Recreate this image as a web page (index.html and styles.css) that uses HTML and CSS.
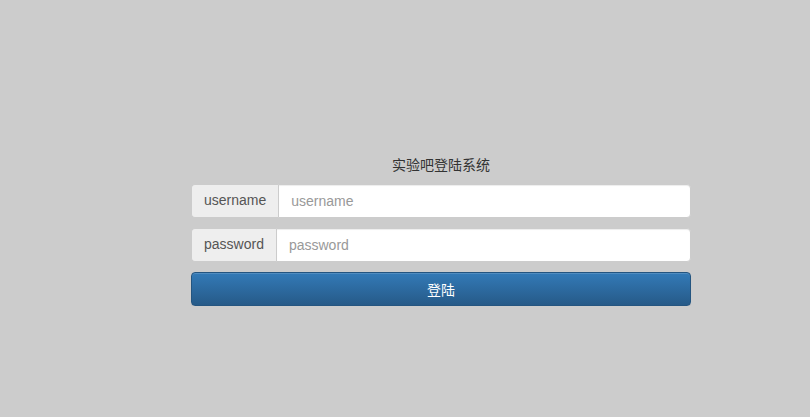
FILE: index.html
```html
<!DOCTYPE html>
<html lang="zh">
<head>
<meta charset="utf-8">
<title>实验吧登陆系统</title>
<link rel="stylesheet" href="styles.css">
</head>
<body>
<div class="page">
  <form class="login">
    <div class="title">实验吧登陆系统</div>
    <div class="input-group">
      <span class="addon">username</span>
      <input class="field" type="text" placeholder="username">
    </div>
    <div class="input-group">
      <span class="addon">password</span>
      <input class="field" type="password" placeholder="password">
    </div>
    <button class="btn" type="button">登陆</button>
  </form>
</div>
</body>
</html>
```
FILE: styles.css
```css
* { box-sizing: border-box; }
html, body {
  margin: 0;
  padding: 0;
  background: #cccccc;
  font-family: "Liberation Sans", Arial, "Noto Sans CJK SC", sans-serif;
  font-size: 14px;
  line-height: 1.42857;
  color: #333;
}
.page {
  padding-top: 154px;
  padding-left: 191px;
}
.login {
  width: 500px;
  display: flex;
  flex-direction: column;
  gap: 10px;
}
.title {
  text-align: center;
  height: 20px;
  line-height: 20px;
  font-family: "Noto Sans CJK SC", sans-serif;
  font-size: 14px;
  color: #333;
}
.input-group {
  display: flex;
  height: 34px;
}
.addon {
  display: flex;
  align-items: center;
  padding: 6px 12px;
  background: #eeeeee;
  border: 1px solid #cccccc;
  border-right: 0;
  border-radius: 4px 0 0 4px;
  color: #555;
  font-size: 14px;
  white-space: nowrap;
}
.field {
  flex: 1;
  min-width: 0;
  height: 34px;
  padding: 6px 12px;
  border: 1px solid #cccccc;
  border-radius: 0 4px 4px 0;
  background: #fff;
  font-family: "Liberation Sans", Arial, sans-serif;
  font-size: 14px;
  color: #555;
  box-shadow: inset 0 1px 1px rgba(0,0,0,.075);
  outline: none;
}
.field::placeholder { color: #999; }
.btn {
  width: 100%;
  height: 34px;
  padding: 6px 12px;
  border: 1px solid #245580;
  border-radius: 4px;
  background: linear-gradient(to bottom, #337ab7 0, #265a88 100%);
  color: #fff;
  font-family: "Noto Sans CJK SC", sans-serif;
  font-size: 14px;
  box-shadow: inset 0 1px 0 rgba(255,255,255,.15), 0 1px 1px rgba(0,0,0,.075);
  cursor: pointer;
}
```
